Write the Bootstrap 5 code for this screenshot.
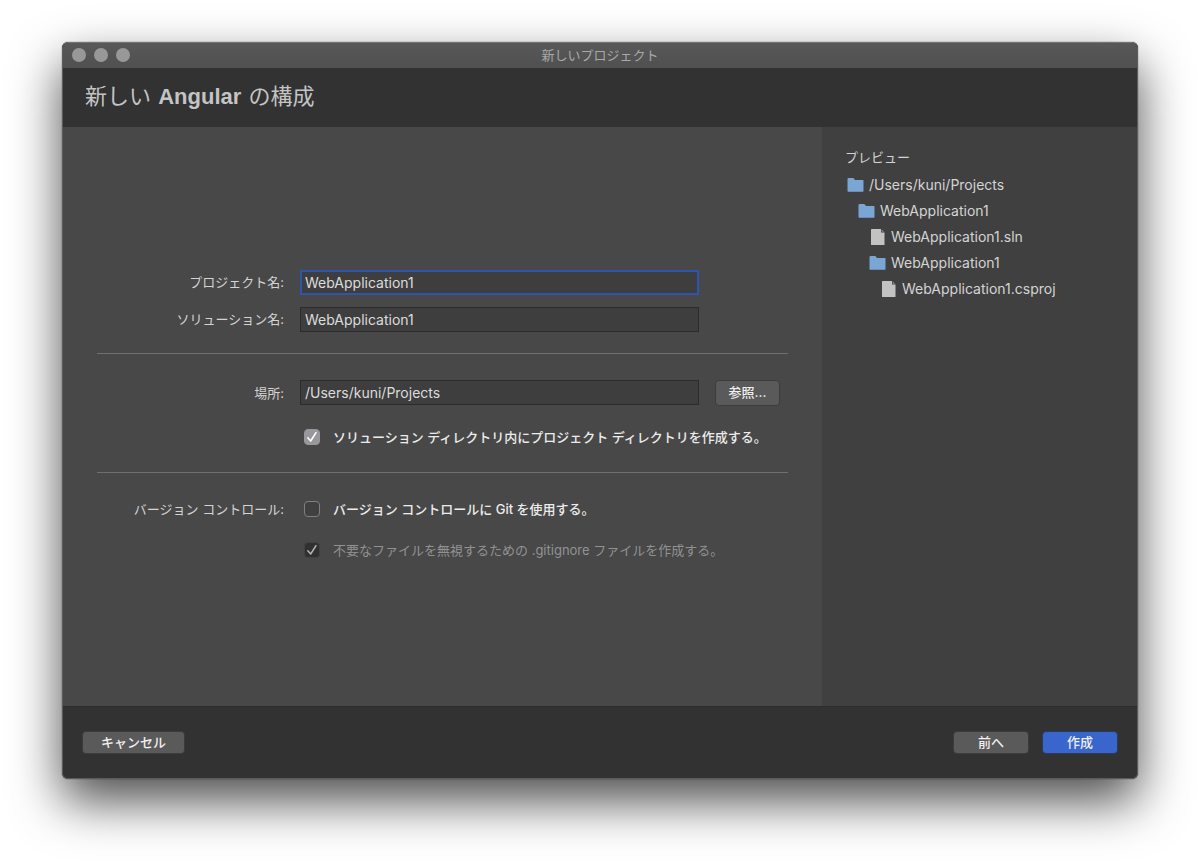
<!DOCTYPE html>
<html lang="ja">
<head>
<meta charset="utf-8">
<meta name="viewport" content="width=device-width, initial-scale=1">
<title>新しいプロジェクト</title>
<link href="https://cdn.jsdelivr.net/npm/bootstrap@5.3.0/dist/css/bootstrap.min.css" rel="stylesheet">
<style>
  body {
    padding: 42px 62px 83px;
    background: #fff;
    color: #d4d4d4;
    font-family: Inter, "Noto Sans CJK JP", sans-serif;
    font-size: 14px;
    line-height: 20px;
  }
  .ja, .dialog-form label, .btn { font-size: 13px; }
  .dialog-window {
    background: #484848;
    border: 1px solid #5c5c5c;
    border-top-color: #747474;
    border-radius: 6px;
    box-shadow: 0 0 1px #000, 0 22px 50px rgba(0, 0, 0, .7);
  }
  .title-bar {
    height: 25px;
    padding: 0 9px 2px;
    background: linear-gradient(#585858, #505050);
    color: #a9a9a9;
  }
  .lights { flex: 1 0 0; gap: 8px; }
  .light { width: 14px; height: 14px; padding: 0; border: 0; border-radius: 50%; background: #989898; }
  .dialog-head { height: 59px; padding: 0 22px 3px; background: #323232; }
  .dialog-head h1 { font-size: 22px; line-height: 30px; color: #c4c4c4; font-weight: 400; }
  .dialog-head strong { margin: 0 1px; font-family: "Liberation Sans", sans-serif; }
  .dialog-form { padding: 0 34px 4px; }
  .form-line { display: grid; grid-template-columns: 187px 1fr 65px; column-gap: 16px; align-items: center; padding-right: 8px; }
  .form-line > .name { text-align: right; }
  .form-line .form-control {
    height: 25px;
    padding: 0 4px;
    border: 1px solid #2b2b2b;
    border-radius: 0;
    background: #3e3e3e;
    color: #dcdcdc;
    font-size: 14px;
    line-height: 20px;
    box-shadow: none;
  }
  .form-line .form-control.current, .form-line .form-control:focus { padding: 0 3px; border: 2px solid #2e55ae; }
  .form-line .ticks { grid-column: 2 / 4; padding-left: 4px; gap: 13px; color: #ececec; white-space: nowrap; }
  .ticks .form-check-input { width: 16px; height: 16px; border: 1px solid #808080; border-radius: 4px; background-color: #404040; background-size: 16px; }
  .ticks .form-check-input:checked {
    border-color: #98989c;
    background-color: #98989c;
    background-image: url("data:image/svg+xml,%3csvg xmlns='http://www.w3.org/2000/svg' viewBox='0 0 16 16'%3e%3cpath d='M3.800 8.800l2.900 3.200 5.300-8.400' fill='none' stroke='%23fff' stroke-width='1.6' stroke-linecap='round' stroke-linejoin='round'/%3e%3c/svg%3e");
  }
  .ticks .form-check-input:disabled { opacity: 1; border-color: #414141; background-color: #303030; background-image: url("data:image/svg+xml,%3csvg xmlns='http://www.w3.org/2000/svg' viewBox='0 0 16 16'%3e%3cpath d='M3.800 8.800l2.900 3.200 5.300-8.400' fill='none' stroke='%23b4b4b4' stroke-width='1.5' stroke-linecap='round' stroke-linejoin='round'/%3e%3c/svg%3e"); }
  .ticks .form-check-input:disabled ~ .form-check-label { opacity: 1; color: #929292; }
  .dialog-form hr { margin: 21px 0 26px; border-top: 1px solid #707070; opacity: 1; }
  .field-gap { margin-bottom: 12px; }
  .tick-gap { margin-bottom: 21px; }
  .btn { --bs-btn-color: #f0f0f0; --bs-btn-bg: #5a5a5a; --bs-btn-border-color: #3c3c3c; --bs-btn-hover-color: #fff; --bs-btn-hover-bg: #666;
    padding: 0 0 2px; border-radius: 4px; line-height: 18px; font-weight: 500; }
  .btn.browse { height: 26px; }
  .btn.create { --bs-btn-bg: #3866cc; --bs-btn-border-color: #2d3a58; --bs-btn-hover-bg: #4373da; }
  .dialog-foot { height: 72px; padding: 0 19px; background: #323232; border-top: 1px solid #2c2c2c; border-radius: 0 0 5px 5px; gap: 13px; }
  .dialog-foot .btn { width: 76px; height: 23px; }
  .dialog-foot .cancel { width: 103px; }
  .preview { flex: 0 0 315px; padding: 21px 23px; background: #404040; }
  .tree, .tree ul { list-style: none; margin: 0; padding: 0; }
  .tree ul { padding-left: 11px; }
  .tree-item { height: 26px; padding-left: 2px; gap: 5px; }
  @media (min-width: 900px) { .dialog-body { min-height: 579px; } }
</style>
</head>
<body class="min-vh-100 d-flex flex-column">
<svg class="d-none">
  <symbol id="folder" viewBox="0 0 17 16"><path d="M.5 2Q.5 1 1.500 1H6q.6 0 .9.500l1 1.500h8q.6 0 .6.600v10.400q0 .7-.7.700H1.200q-.7 0-.7-.7z" fill="#7aa6d6"/></symbol>
  <symbol id="file" viewBox="0 0 17 16"><path d="M2 .500Q2 0 2.500 0h9.500v3.500h3.500v12q0 .5-.5.500H2.500q-.5 0-.5-.5z" fill="#c2c2c2"/><path d="M12.700.400l2.400 2.400h-2.400z" fill="#919191"/></symbol>
</svg>
<main class="dialog-window flex-grow-1 d-flex flex-column">
  <div class="title-bar d-flex align-items-center rounded-top">
    <div class="lights d-flex">
      <button class="light" type="button" aria-label="閉じる"></button>
      <button class="light" type="button" aria-label="しまう"></button>
      <button class="light" type="button" aria-label="拡大"></button>
    </div>
    <span class="ja">新しいプロジェクト</span>
    <div class="lights"></div>
  </div>
  <header class="dialog-head d-flex align-items-center">
    <h1 class="m-0">新しい <strong>Angular</strong> の構成</h1>
  </header>
  <div class="dialog-body d-flex flex-grow-1">
    <form id="config" class="dialog-form flex-grow-1 d-flex flex-column justify-content-center">
      <div class="form-line field-gap">
        <label class="name" for="project">プロジェクト名:</label>
        <input class="form-control current" id="project" type="text" value="WebApplication1">
      </div>
      <div class="form-line">
        <label class="name" for="solution">ソリューション名:</label>
        <input class="form-control" id="solution" type="text" value="WebApplication1">
      </div>
      <hr>
      <div class="form-line tick-gap">
        <label class="name" for="place">場所:</label>
        <input class="form-control" id="place" type="text" value="/Users/kuni/Projects">
        <button class="btn browse" type="button">参照...</button>
      </div>
      <div class="form-line pb-1">
        <span></span>
        <div class="ticks d-flex align-items-center">
          <input class="form-check-input m-0" id="subdir" type="checkbox" checked>
          <label class="form-check-label fw-medium" for="subdir">ソリューション ディレクトリ内にプロジェクト ディレクトリを作成する。</label>
        </div>
      </div>
      <hr>
      <div class="form-line tick-gap">
        <span class="name ja">バージョン コントロール:</span>
        <div class="ticks d-flex align-items-center">
          <input class="form-check-input m-0" id="git" type="checkbox">
          <label class="form-check-label fw-medium" for="git">バージョン コントロールに Git を使用する。</label>
        </div>
      </div>
      <div class="form-line">
        <span></span>
        <div class="ticks d-flex align-items-center">
          <input class="form-check-input m-0" id="ignore" type="checkbox" checked disabled>
          <label class="form-check-label" for="ignore">不要なファイルを無視するための .gitignore ファイルを作成する。</label>
        </div>
      </div>
    </form>
    <aside class="preview">
      <h2 class="ja m-0 mb-1 fw-normal lh-base">プレビュー</h2>
      <ul class="tree">
        <li><div class="tree-item d-flex align-items-center"><svg width="17" height="16"><use href="#folder"/></svg>/Users/kuni/Projects</div>
          <ul>
            <li><div class="tree-item d-flex align-items-center"><svg width="17" height="16"><use href="#folder"/></svg>WebApplication1</div>
              <ul>
                <li><div class="tree-item d-flex align-items-center"><svg width="17" height="16"><use href="#file"/></svg>WebApplication1.sln</div></li>
                <li><div class="tree-item d-flex align-items-center"><svg width="17" height="16"><use href="#folder"/></svg>WebApplication1</div>
                  <ul>
                    <li><div class="tree-item d-flex align-items-center"><svg width="17" height="16"><use href="#file"/></svg>WebApplication1.csproj</div></li>
                  </ul>
                </li>
              </ul>
            </li>
          </ul>
        </li>
      </ul>
    </aside>
  </div>
  <footer class="dialog-foot d-flex align-items-center">
    <button class="btn cancel me-auto" type="button">キャンセル</button>
    <button class="btn" type="button">前へ</button>
    <button class="btn create" type="submit" form="config">作成</button>
  </footer>
</main>
<script src="https://cdn.jsdelivr.net/npm/bootstrap@5.3.0/dist/js/bootstrap.bundle.min.js"></script>
</body>
</html>
